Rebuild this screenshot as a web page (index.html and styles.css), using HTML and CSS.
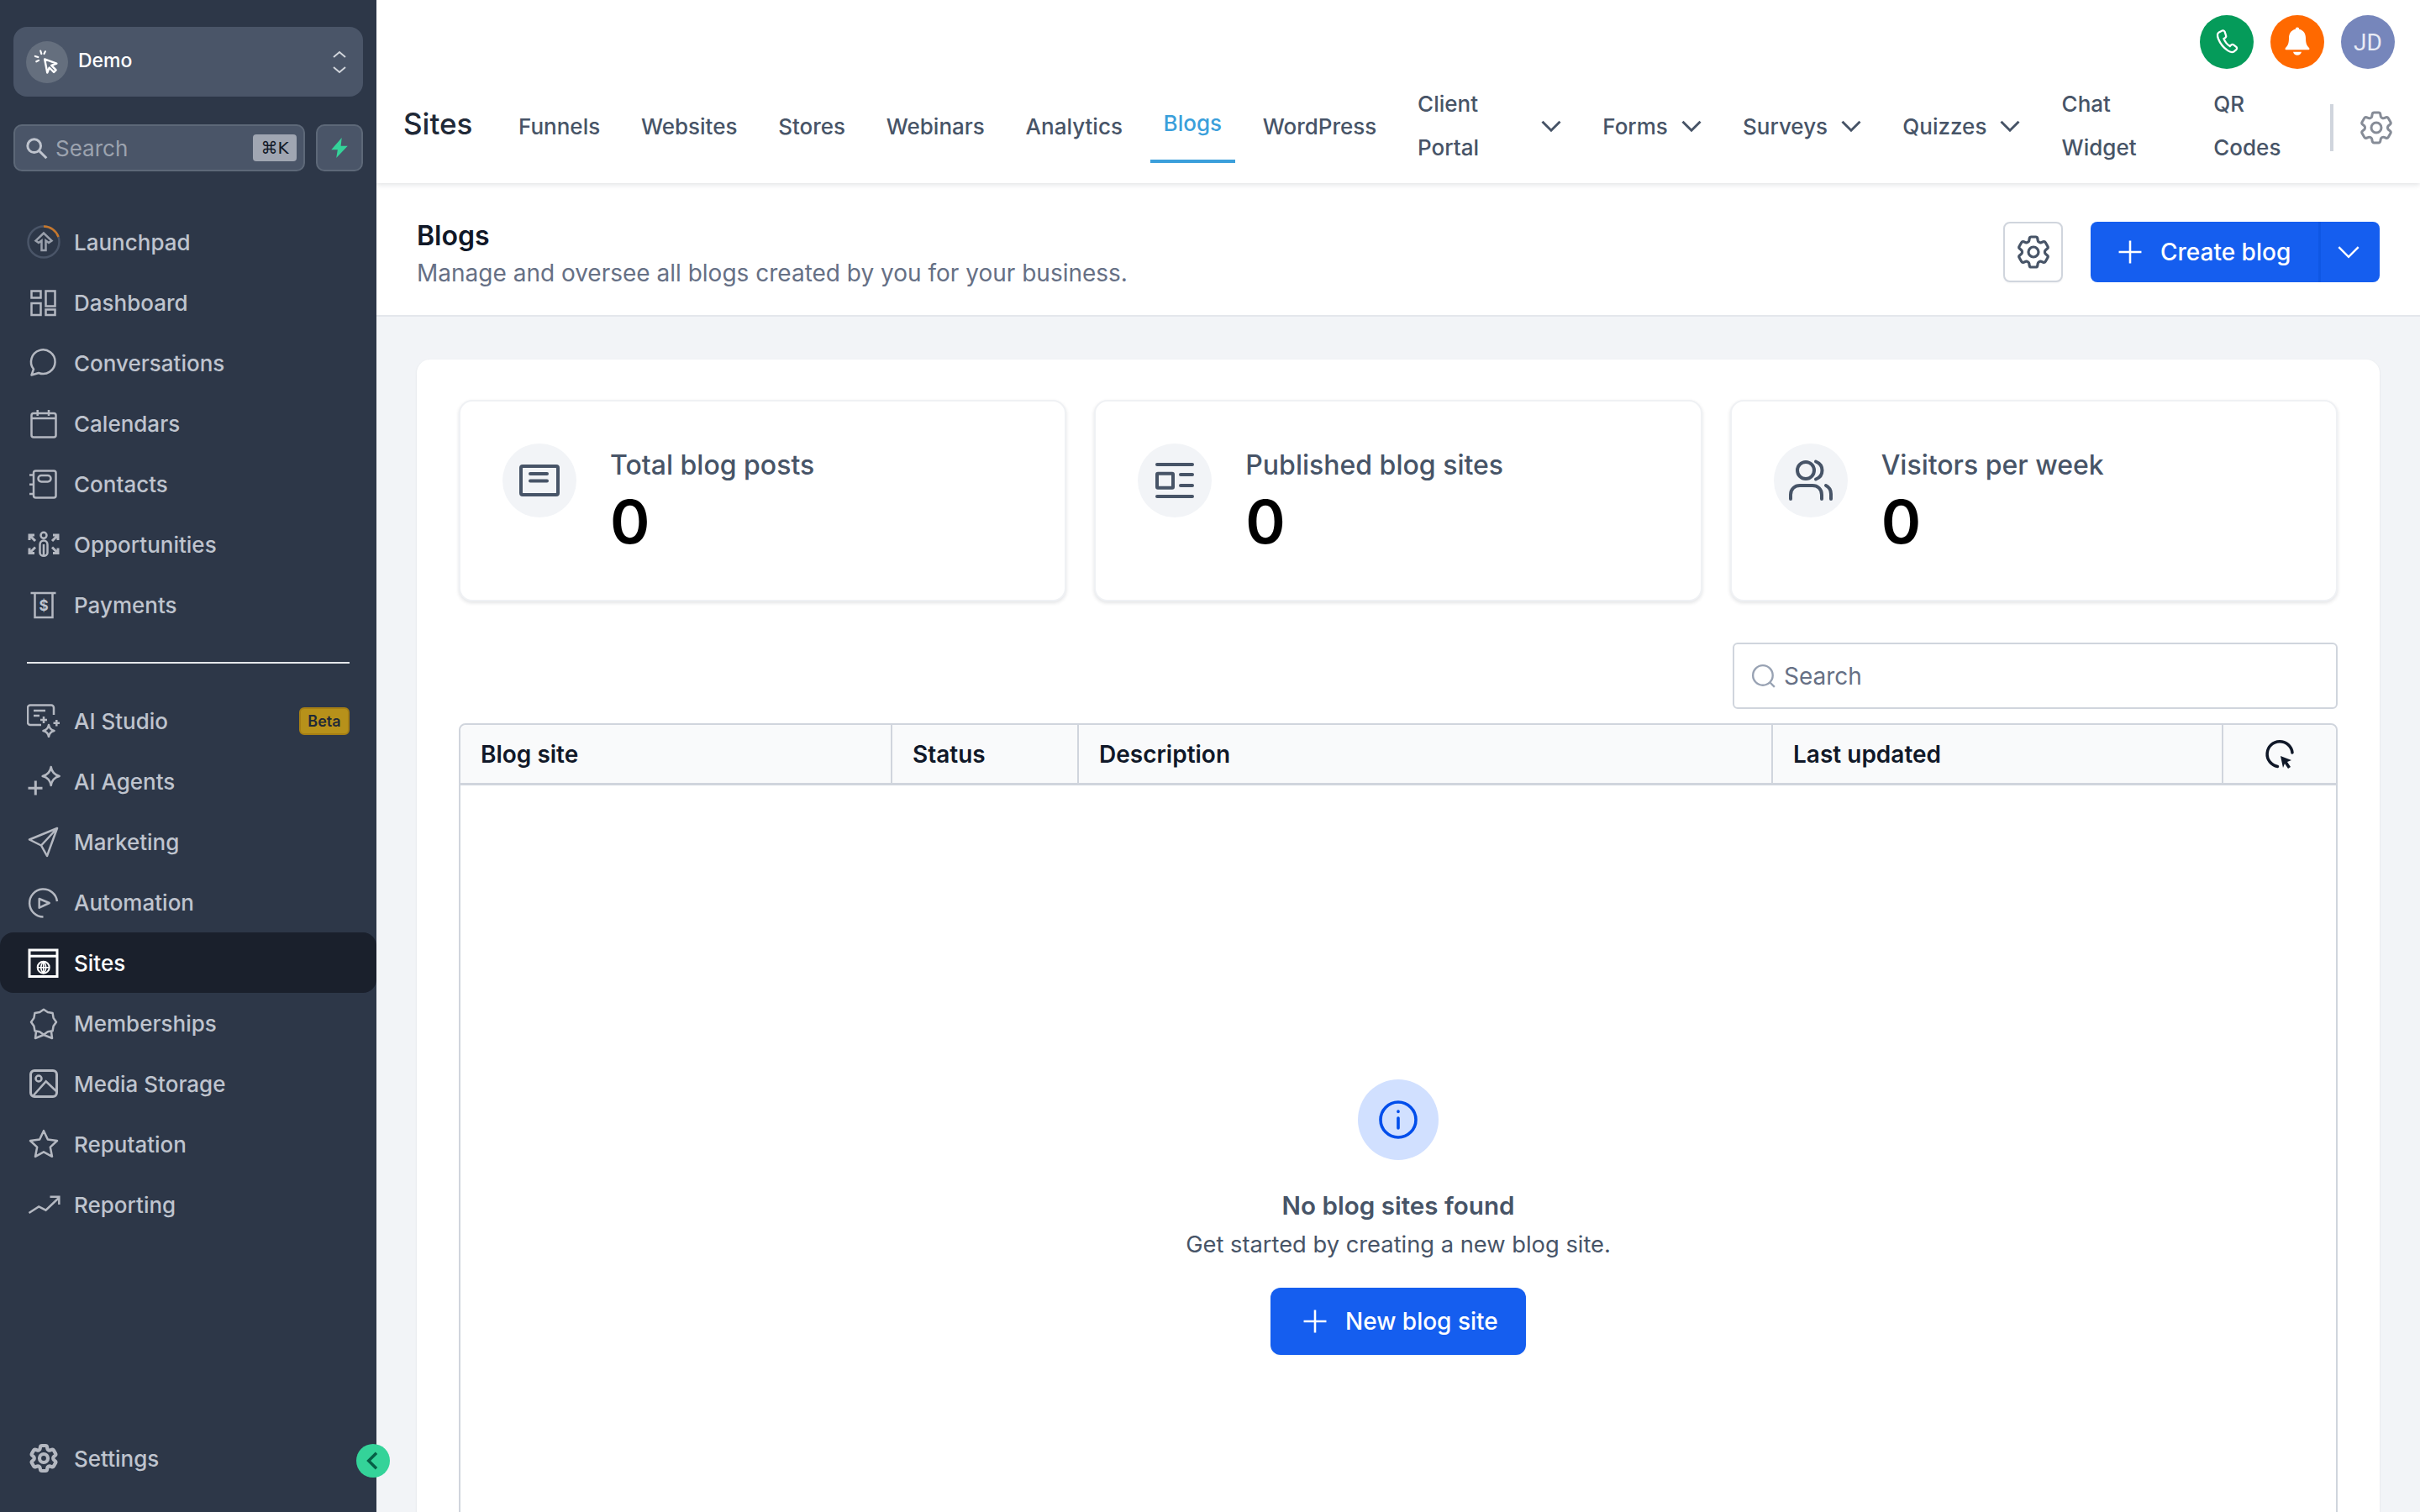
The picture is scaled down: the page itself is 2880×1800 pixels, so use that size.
FILE: index.html
```html
<!DOCTYPE html>
<html lang="en">
<head>
    <meta charset="UTF-8">
    <meta name="viewport" content="width=device-width, initial-scale=1.0">
    <title>Blogs</title>
    <link rel="stylesheet" href="styles.css">
</head>
<body>
    <svg class="sprites" width="0" height="0">
        <symbol id="gear" viewBox="0 0 24 24">
            <path d="M9.594 3.94c.09-.542.56-.94 1.11-.94h2.593c.55 0 1.02.398 1.11.94l.213 1.281c.063.374.313.686.645.87.074.04.147.083.22.127.325.196.72.257 1.075.124l1.217-.456a1.125 1.125 0 0 1 1.37.49l1.296 2.247a1.125 1.125 0 0 1-.26 1.431l-1.003.827c-.293.241-.438.613-.43.992a7.723 7.723 0 0 1 0 .255c-.008.378.137.75.43.991l1.004.827c.424.35.534.955.26 1.43l-1.298 2.247a1.125 1.125 0 0 1-1.369.491l-1.217-.456c-.355-.133-.75-.072-1.076.124a6.47 6.47 0 0 1-.22.128c-.331.183-.581.495-.644.869l-.213 1.281c-.09.543-.56.94-1.11.94h-2.594c-.55 0-1.019-.398-1.11-.94l-.213-1.281c-.062-.374-.312-.686-.644-.87a6.52 6.52 0 0 1-.22-.127c-.325-.196-.72-.257-1.076-.124l-1.217.456a1.125 1.125 0 0 1-1.369-.49l-1.297-2.247a1.125 1.125 0 0 1 .26-1.431l1.004-.827c.292-.24.437-.613.43-.991a6.932 6.932 0 0 1 0-.255c.007-.38-.138-.751-.43-.992l-1.004-.827a1.125 1.125 0 0 1-.26-1.43l1.297-2.247a1.125 1.125 0 0 1 1.37-.491l1.216.456c.356.133.751.072 1.076-.124.072-.044.146-.086.22-.128.332-.183.582-.495.644-.869l.214-1.28Z"/>
            <circle cx="12" cy="12" r="3"/>
        </symbol>
        <symbol id="chev" viewBox="0 0 24 24"><path d="M5 8.500l7 7 7-7"/></symbol>
        <symbol id="plus" viewBox="0 0 24 24"><path d="M12 2.500v19M2.500 12h19"/></symbol>
    </svg>

    <div class="app">
        <aside class="sidebar">
            <div class="workspace">
                <span class="workspace-logo">
                    <svg viewBox="0 0 24 24" class="ico-sm"><path d="M10 9.500l10 3.600-4.300 1.700 3.800 3.800-1.800 1.800-3.800-3.800-1.700 4.300z" fill="none" stroke="#fff" stroke-width="1.700" stroke-linejoin="round"/><path d="M6.500 2.500l.8 2.500M2 7l2.500.8M10.500 3l-1 2M3 11.500l2-1" fill="none" stroke="#fff" stroke-width="1.500" stroke-linecap="round"/></svg>
                </span>
                <span class="workspace-name">Demo</span>
                <svg class="workspace-arrows" viewBox="0 0 16 28"><path d="M1 8l7-6 7 6M1 20l7 6 7-6"/></svg>
            </div>

            <div class="search-row">
                <div class="side-search">
                    <svg viewBox="0 0 24 24" class="side-search-ico"><circle cx="9.500" cy="9.500" r="7"/><path d="M15 15l7.500 7.500"/></svg>
                    <span class="side-search-text">Search</span>
                    <kbd class="kbd">⌘K</kbd>
                </div>
                <button class="bolt-btn">
                    <svg viewBox="0 0 24 24"><path d="M14.500 1L3 14h7l-1.500 9L21 10h-7.500z" fill="#34d399"/></svg>
                </button>
            </div>

            <nav class="side-group">
                <a class="side-item">
                    <svg class="side-ico" viewBox="0 0 40 40"><circle cx="20" cy="20" r="18.500" stroke="#4a5568"/><path d="M20 1.500a18.500 18.500 0 0 1 17.500 12.500" stroke="#c6772c"/><path d="M20 9.500l-9.500 9 3.500 2.500 3.500-2.500V30h5V18.500l3.500 2.500 3.500-2.500z" stroke="#9aa0ac"/></svg>
                    <span>Launchpad</span>
                </a>
                <a class="side-item">
                    <svg class="side-ico" viewBox="0 0 40 40"><rect x="5.500" y="6.500" width="11" height="8"/><rect x="22.500" y="6.500" width="11" height="18"/><rect x="5.500" y="21" width="11" height="14"/><rect x="22.500" y="28.500" width="11" height="6.500"/></svg>
                    <span>Dashboard</span>
                </a>
                <a class="side-item">
                    <svg class="side-ico" viewBox="0 0 40 40"><path d="M5.500 34.500L8 27.500A14.300 14.300 0 1 1 14 32z" stroke-linejoin="round"/></svg>
                    <span>Conversations</span>
                </a>
                <a class="side-item">
                    <svg class="side-ico" viewBox="0 0 40 40"><rect x="5.500" y="8" width="29" height="28.500" rx="2.500"/><path d="M5.500 14h29M12.700 4v7M26 4v7"/></svg>
                    <span>Calendars</span>
                </a>
                <a class="side-item">
                    <svg class="side-ico" viewBox="0 0 40 40"><rect x="8" y="4.500" width="26.500" height="32" rx="2.500"/><rect x="13.500" y="10" width="15" height="7.500" rx="3.700"/><path d="M3 9.500h6M3 20.700h6M3 32h6"/></svg>
                    <span>Contacts</span>
                </a>
                <a class="side-item">
                    <svg class="side-ico" viewBox="0 0 40 40"><circle cx="20" cy="9.300" r="3.500"/><path d="M15.500 20.500c0-3 2-5 4.500-5s4.500 2 4.500 5v9.500c0 5-9 5-9 0zM20 20v13"/><path d="M3 15V9h6M3 9l7 7M37 15V9h-6M37 9l-7 7M3 24.500v6h6M3 30.500l7-7M37 24.500v6h-6M37 30.500l-7-7" stroke-width="3"/></svg>
                    <span>Opportunities</span>
                </a>
                <a class="side-item">
                    <svg class="side-ico" viewBox="0 0 40 40"><path d="M4.500 6h30M9.500 6v29h21V6"/><text x="20" y="27" class="dollar">$</text></svg>
                    <span>Payments</span>
                </a>
            </nav>

            <div class="side-divider"></div>

            <nav class="side-group">
                <a class="side-item">
                    <svg class="side-ico" viewBox="0 0 40 40"><path d="M17 25H4a3 3 0 0 1-3-3V4.500a3 3 0 0 1 3-3h25a3 3 0 0 1 3 3V13"/><path d="M8 8h14M8 14h7M20 15v8M16 19h8M35.300 19v7.500M31.500 22.700h7.500"/><path d="M26 25c.7 4 2.500 6 6.500 7-4 1-5.800 3-6.500 7-.7-4-2.500-6-6.500-7 4-1 5.800-3 6.500-7z" stroke-linejoin="round"/></svg>
                    <span>AI Studio</span>
                    <span class="beta">Beta</span>
                </a>
                <a class="side-item">
                    <svg class="side-ico" viewBox="0 0 40 40"><path d="M28.700 3c1 6 3.800 9.500 10 11-6.200 1.500-9 5-10 11-1-6-3.800-9.500-10-11 6.200-1.500 9-5 10-11z" stroke-linejoin="round"/><path d="M10.300 19.500v17M1.500 28.300h17" stroke-width="3"/></svg>
                    <span>AI Agents</span>
                </a>
                <a class="side-item">
                    <svg class="side-ico" viewBox="0 0 40 40"><path d="M36 4L3 17.500l14 7 7 12.500zM17 24.500L36 4" stroke-linejoin="round"/></svg>
                    <span>Marketing</span>
                </a>
                <a class="side-item">
                    <svg class="side-ico" viewBox="0 0 40 40"><path d="M36 19A16.500 16.500 0 1 0 19.500 37.500"/><path d="M14.700 16v10.700L26.700 21z" stroke-linejoin="round"/></svg>
                    <span>Automation</span>
                </a>
                <a class="side-item side-item--active">
                    <svg class="side-ico" viewBox="0 0 40 40"><rect x="3" y="5" width="33" height="31.500" stroke-width="3"/><path d="M3 12.300h33" stroke-width="3"/><circle cx="19.700" cy="25.700" r="7" stroke-width="2"/><path d="M12.700 25.700h14M19.700 18.700v14M19.700 18.700c-4 4-4 10 0 14M19.700 18.700c4 4 4 10 0 14" stroke-width="1.500"/></svg>
                    <span>Sites</span>
                </a>
                <a class="side-item">
                    <svg class="side-ico" viewBox="0 0 40 40"><path d="M20 3.700L24.800 7.100 30.600 8.100 31.600 13.900 35 18.700 31.600 23.500 30.600 29.300 24.800 30.300 20 33.700 15.200 30.300 9.400 29.300 8.400 23.500 5 18.700 8.400 13.900 9.400 8.100 15.200 7.100z" stroke-linejoin="round"/><path d="M11 30l-1 8 10-4 10 4-1-8" stroke-linejoin="round"/></svg>
                    <span>Memberships</span>
                </a>
                <a class="side-item">
                    <svg class="side-ico" viewBox="0 0 40 40"><rect x="4.500" y="4.500" width="31" height="31" rx="4.500" stroke-width="3"/><circle cx="14" cy="14" r="3.500"/><path d="M7 35l15.700-17.700L36 30"/></svg>
                    <span>Media Storage</span>
                </a>
                <a class="side-item">
                    <svg class="side-ico" viewBox="0 0 24 24"><path d="M12 2.500l2.900 6.200 6.700.9-4.900 4.600 1.300 6.700-6-3.300-6 3.300 1.300-6.700L2.400 9.600l6.700-.9z" stroke-linejoin="round"/></svg>
                    <span>Reputation</span>
                </a>
                <a class="side-item">
                    <svg class="side-ico" viewBox="0 0 24 24"><path d="M1.500 18l7-4.500 5 2.500 9-8.500M16.500 6.500h6.500V12"/></svg>
                    <span>Reporting</span>
                </a>
            </nav>

            <a class="side-item side-item--bottom">
                <svg class="side-ico"><use href="#gear"/></svg>
                <span>Settings</span>
            </a>

            <button class="collapse-btn">
                <svg viewBox="0 0 24 24"><path d="M15 5l-7 7 7 7"/></svg>
            </button>
        </aside>

        <div class="content">
            <header class="topbar">
                <div class="topbar-actions">
                    <span class="round-btn round-btn--call">
                        <svg viewBox="0 0 24 24"><path d="M8.200 2.500L5.500 3.800C3.800 4.800 4 7 5 9.500c1.500 3.700 4.300 7.200 7.800 9.700 2 1.400 4 1.700 5.500.7l1.700-1.500c.7-.7.700-1.700 0-2.300l-2.200-1.700c-.7-.5-1.500-.4-2.100.1l-1 1c-2.200-1.300-4.200-3.700-5.200-6.200l1.200-.8c.7-.5.900-1.300.6-2L10.300 3.300c-.4-.8-1.300-1.200-2.100-.8z"/></svg>
                    </span>
                    <span class="round-btn round-btn--bell">
                        <svg viewBox="0 0 24 24"><path d="M12 1.500c-.8 0-1.300.5-1.300 1.300C7.500 3.500 6 6 6 9.200c0 3.800-.7 5.400-2.500 7.100-.4.500-.2 1.200.5 1.200h16c.7 0 .9-.7.5-1.200C18.700 14.600 18 13 18 9.200c0-3.200-1.500-5.700-4.700-6.400 0-.8-.5-1.300-1.300-1.300zM9 19h6c-.4 1.500-1.500 2.400-3 2.400S9.400 20.500 9 19z"/></svg>
                    </span>
                    <span class="round-btn round-btn--user">JD</span>
                </div>
                <div class="topnav">
                    <h1 class="topnav-title">Sites</h1>
                    <nav class="topnav-items">
                        <a class="tab">Funnels</a>
                        <a class="tab">Websites</a>
                        <a class="tab">Stores</a>
                        <a class="tab">Webinars</a>
                        <a class="tab">Analytics</a>
                        <a class="tab tab--active">Blogs</a>
                        <a class="tab">WordPress</a>
                        <a class="tab tab--client"><span class="tab-wrap">Client Portal</span><svg class="tab-chev"><use href="#chev"/></svg></a>
                        <a class="tab">Forms<svg class="tab-chev"><use href="#chev"/></svg></a>
                        <a class="tab">Surveys<svg class="tab-chev"><use href="#chev"/></svg></a>
                        <a class="tab">Quizzes<svg class="tab-chev"><use href="#chev"/></svg></a>
                        <a class="tab tab--chat"><span class="tab-wrap">Chat Widget</span></a>
                        <a class="tab tab--qr"><span class="tab-wrap">QR Codes</span></a>
                    </nav>
                    <span class="topnav-sep"></span>
                    <svg class="topnav-gear"><use href="#gear"/></svg>
                </div>
            </header>

            <section class="page-head">
                <div class="page-head-text">
                    <h2>Blogs</h2>
                    <p>Manage and oversee all blogs created by you for your business.</p>
                </div>
                <button class="gear-btn"><svg><use href="#gear"/></svg></button>
                <div class="split-btn">
                    <span class="split-main"><svg class="plus-ico"><use href="#plus"/></svg>Create blog</span>
                    <span class="split-arrow"><svg><use href="#chev"/></svg></span>
                </div>
            </section>

            <main class="main">
                <div class="panel">
                    <div class="stats">
                        <div class="stat">
                            <span class="stat-ico">
                                <svg viewBox="0 0 50 50"><rect x="3" y="8" width="44" height="34" rx="2"/><path d="M14 17h20M14 25.500h20" stroke-linecap="round"/></svg>
                            </span>
                            <div class="stat-text">
                                <div class="stat-label">Total blog posts</div>
                                <div class="stat-value">0</div>
                            </div>
                        </div>
                        <div class="stat">
                            <span class="stat-ico">
                                <svg viewBox="0 0 50 50"><path d="M4 6h42M4 44h42M32 18h14M32 31h14" stroke-linecap="round"/><rect x="4" y="16.700" width="19" height="17" rx="1"/></svg>
                            </span>
                            <div class="stat-text">
                                <div class="stat-label">Published blog sites</div>
                                <div class="stat-value">0</div>
                            </div>
                        </div>
                        <div class="stat">
                            <span class="stat-ico">
                                <svg viewBox="0 0 54 54"><circle cx="21" cy="15" r="10"/><path d="M3 49v-5c0-7 5-11 11-11h15c6 0 11 4 11 11v5M33 4.500c5 2 7.500 6 7.500 10.500s-2.500 8.500-7.500 10.500M45 33c4 2 6 6 6 10v6" stroke-linecap="round"/></svg>
                            </span>
                            <div class="stat-text">
                                <div class="stat-label">Visitors per week</div>
                                <div class="stat-value">0</div>
                            </div>
                        </div>
                    </div>

                    <div class="toolbar">
                        <div class="table-search">
                            <svg viewBox="0 0 28 28"><circle cx="13" cy="13" r="11"/><path d="M21 21l5 5"/></svg>
                            <span>Search</span>
                        </div>
                    </div>

                    <div class="table">
                        <div class="table-head">
                            <div class="th">Blog site</div>
                            <div class="th">Status</div>
                            <div class="th">Description</div>
                            <div class="th">Last updated</div>
                            <div class="th th--refresh">
                                <svg viewBox="0 0 36 36"><path d="M33 16A15 15 0 1 0 15.500 32.500" fill="none" stroke="#101828" stroke-width="3.500" stroke-linecap="round"/><path d="M19 20l13 5-5 2 4 6-3 2-4-6-2 5z" fill="#101828"/></svg>
                            </div>
                        </div>
                        <div class="table-body">
                            <span class="empty-ico">
                                <svg viewBox="0 0 24 24"><circle cx="12" cy="12" r="10.500"/><path d="M12 11v6M12 7v.2"/></svg>
                            </span>
                            <h3>No blog sites found</h3>
                            <p>Get started by creating a new blog site.</p>
                            <button class="new-btn"><svg class="plus-ico"><use href="#plus"/></svg>New blog site</button>
                        </div>
                    </div>
                </div>
            </main>
        </div>
    </div>
</body>
</html>
```

FILE: styles.css
```css
* {
    box-sizing: border-box;
}
html, body {
    margin: 0;
    height: 100%;
    overflow: hidden;
}
body {
    font-family: Inter, "Noto Sans", sans-serif;
    font-size: 28px;
    color: #101828;
    background: #f2f4f7;
}
button {
    font-family: inherit;
    cursor: pointer;
}
h1, h2, h3, p {
    margin: 0;
}
.sprites {
    display: block;
    height: 0;
}
.app {
    display: flex;
    height: 100vh;
}

/* sidebar */
.sidebar {
    position: relative;
    flex: 0 0 448px;
    display: flex;
    flex-direction: column;
    padding: 32px 0 28px;
    background: #2d3748;
    z-index: 2;
}
.workspace {
    display: flex;
    align-items: center;
    height: 83px;
    margin: 0 16px;
    padding: 0 20px 0 15px;
    background: #4a5568;
    border-radius: 16px;
}
.workspace-logo {
    display: flex;
    align-items: center;
    justify-content: center;
    width: 50px;
    height: 50px;
    border-radius: 50%;
    background: #656f7e;
}
.ico-sm {
    width: 34px;
    height: 34px;
}
.workspace-name {
    margin-left: 12px;
    flex: 1;
    color: #fff;
    font-size: 23px;
    font-weight: 500;
    margin-bottom: 4px;
}
.workspace-arrows {
    width: 16px;
    height: 28px;
    fill: none;
    stroke: #d1d5db;
    stroke-width: 2;
}
.search-row {
    display: flex;
    gap: 13px;
    margin: 33px 16px 0;
}
.side-search {
    flex: 1;
    display: flex;
    align-items: center;
    height: 56px;
    padding: 0 8px 0 12px;
    background: #4a5568;
    border: 2px solid #5d6878;
    border-radius: 10px;
}
.side-search-ico {
    width: 27px;
    height: 27px;
    fill: none;
    stroke: #bfc4ce;
    stroke-width: 2.6;
}
.side-search-text {
    flex: 1;
    margin-left: 9px;
    color: #9ca3af;
    font-size: 26px;
}
.kbd {
    display: flex;
    align-items: center;
    justify-content: center;
    width: 52px;
    height: 32px;
    border-radius: 4px;
    background: #a0a6b2;
    color: #111827;
    font-family: "DejaVu Sans", sans-serif;
    font-size: 20px;
}
.bolt-btn {
    display: flex;
    align-items: center;
    justify-content: center;
    width: 56px;
    height: 56px;
    padding: 0;
    background: #4a5568;
    border: 2px solid #5d6878;
    border-radius: 10px;
}
.bolt-btn svg {
    width: 26px;
    height: 26px;
}
.side-group {
    display: flex;
    flex-direction: column;
    margin-top: 48px;
}
.side-divider + .side-group {
    margin-top: 32px;
}
.side-divider {
    height: 2px;
    margin: 32px 32px 0;
    background: #e5e7eb;
}
.side-item {
    display: flex;
    align-items: center;
    gap: 16px;
    height: 72px;
    padding: 0 32px;
    color: #bfc4ce;
    font-size: 26px;
    font-weight: 500;
    border-radius: 16px;
}
.side-item--active {
    background: #1a202c;
    color: #fff;
}
.side-item--bottom {
    margin-top: auto;
}
.side-ico {
    flex: 0 0 40px;
    width: 40px;
    height: 40px;
    fill: none;
    stroke: #b4b8c1;
    stroke-width: 2.5;
}
.side-ico[viewBox="0 0 24 24"] {
    stroke-width: 1.5;
}
.side-item--active .side-ico {
    stroke: #fff;
}
.dollar {
    fill: #bfc4ce;
    stroke: none;
    font-size: 17px;
    font-weight: 700;
    text-anchor: middle;
}
.beta {
    margin-left: auto;
    display: flex;
    align-items: center;
    justify-content: center;
    width: 60px;
    height: 33px;
    background: #b7911a;
    border: 2px solid #a67f14;
    border-radius: 6px;
    color: #1f2937;
    font-size: 18px;
    font-weight: 600;
}
.collapse-btn {
    position: absolute;
    left: 424px;
    bottom: 41px;
    display: flex;
    align-items: center;
    justify-content: center;
    width: 40px;
    height: 40px;
    padding: 0;
    border: none;
    border-radius: 50%;
    background: #34d399;
}
.collapse-btn svg {
    width: 32px;
    height: 32px;
    fill: none;
    stroke: #065f46;
    stroke-width: 2.6;
}

/* top bar */
.content {
    flex: 1;
    display: flex;
    flex-direction: column;
    min-width: 0;
}
.topbar {
    position: relative;
    height: 218px;
    background: #fff;
    box-shadow: 0 2px 6px rgba(16, 24, 40, 0.12);
    z-index: 1;
}
.topbar-actions {
    position: absolute;
    top: 18px;
    right: 30px;
    display: flex;
    gap: 20px;
}
.round-btn {
    display: flex;
    align-items: center;
    justify-content: center;
    width: 64px;
    height: 64px;
    border-radius: 50%;
    color: #fff;
}
.round-btn svg {
    width: 34px;
    height: 34px;
}
.round-btn--call {
    background: #059b5a;
}
.round-btn--call svg {
    fill: none;
    stroke: #fff;
    stroke-width: 1.6;
}
.round-btn--bell {
    background: #ff6900;
}
.round-btn--bell svg {
    fill: #fff;
    width: 40px;
    height: 40px;
}
.round-btn--user {
    background: #7686bb;
    font-family: Roboto, sans-serif;
    font-size: 28px;
    color: #e8ebf5;
}
.topnav {
    display: flex;
    align-items: center;
    height: 218px;
    padding: 82px 0 0 32px;
}
.topnav-title {
    flex: 0 0 121px;
    font-size: 35px;
    font-weight: 500;
    color: #1f2937;
    margin-bottom: 6px;
}
.topnav-items {
    display: flex;
    align-items: center;
    gap: 16.7px;
}
.tab {
    position: relative;
    display: flex;
    align-items: center;
    height: 88px;
    padding: 0 16px;
    color: #475467;
    font-size: 26px;
    font-weight: 500;
    white-space: nowrap;
}
.tab--active {
    color: #3b9fdb;
    padding-bottom: 4px;
    border-bottom: 4px solid #3b9fdb;
}
.tab-wrap {
    white-space: normal;
    line-height: 52px;
}
.tab--client .tab-wrap {
    width: 131px;
}
.tab--chat .tab-wrap {
    width: 132px;
}
.tab--qr .tab-wrap {
    width: 107px;
}
.tab-chev {
    width: 36px;
    height: 36px;
    margin: 0 -5.5px 0 10px;
    fill: none;
    stroke: #475467;
    stroke-width: 2;
}
.topnav-sep {
    width: 4px;
    height: 56px;
    margin: 4px 0 0 16px;
    background: #d0d5dd;
}
.topnav-gear {
    width: 48px;
    height: 48px;
    margin: 4px 0 0 27px;
    fill: none;
    stroke: #868c97;
    stroke-width: 1.5;
}

/* page header */
.page-head {
    display: flex;
    align-items: center;
    gap: 33px;
    height: 159px;
    padding: 6px 48px 0 48px;
    background: #fff;
    border-bottom: 2px solid #e4e7ec;
}
.page-head-text {
    flex: 1;
    padding-top: 6px;
}
.page-head h2 {
    font-size: 32px;
    font-weight: 600;
    line-height: 40px;
}
.page-head p {
    margin-top: 4px;
    color: #667085;
    font-size: 28px;
    line-height: 40px;
}
.gear-btn {
    display: flex;
    align-items: center;
    justify-content: center;
    width: 71px;
    height: 72px;
    padding: 0;
    background: #fff;
    border: 2px solid #d0d5dd;
    border-radius: 8px;
    box-shadow: 0 1px 2px rgba(16, 24, 40, 0.05);
}
.gear-btn svg {
    width: 48px;
    height: 48px;
    fill: none;
    stroke: #475467;
    stroke-width: 1.6;
}
.split-btn {
    display: flex;
    height: 72px;
    background: #155eef;
    border-radius: 8px;
    color: #fff;
    font-weight: 500;
}
.split-main {
    display: flex;
    align-items: center;
    gap: 19px;
    width: 271px;
    padding-left: 30px;
}
.plus-ico {
    width: 34px;
    height: 34px;
    fill: none;
    stroke: #fff;
    stroke-width: 1.8;
}
.split-arrow {
    display: flex;
    align-items: center;
    justify-content: center;
    width: 73px;
    padding-right: 4px;
    border-left: 3px solid #0f57e4;
}
.split-arrow svg {
    width: 40px;
    height: 40px;
    fill: none;
    stroke: #fff;
    stroke-width: 1.5;
}

/* main panel */
.main {
    flex: 1;
    min-height: 0;
    padding: 51px 48px 0;
    overflow: hidden;
}
.panel {
    height: 1400px;
    padding: 48px 50px;
    background: #fff;
    border-radius: 16px;
    box-shadow: 0 1px 3px rgba(16, 24, 40, 0.08);
}
.stats {
    display: grid;
    grid-template-columns: repeat(3, 1fr);
    gap: 33px;
}
.stat {
    display: flex;
    align-items: flex-start;
    gap: 40px;
    height: 240px;
    padding: 50px 50px;
    background: #fff;
    border: 2px solid #eff1f4;
    border-radius: 16px;
    box-shadow: 0 2px 4px rgba(16, 24, 40, 0.12);
}
.stat-ico {
    flex: 0 0 88px;
    display: flex;
    align-items: center;
    justify-content: center;
    width: 88px;
    height: 88px;
    border-radius: 50%;
    background: #f2f4f7;
}
.stat-ico svg {
    width: 50px;
    height: 50px;
    fill: none;
    stroke: #475467;
    stroke-width: 4;
}
.stat:last-child .stat-ico svg {
    width: 54px;
    height: 54px;
}
.stat-text {
    margin-top: 3px;
}
.stat-label {
    color: #475467;
    font-size: 32px;
    font-weight: 500;
    line-height: 46px;
}
.stat-value {
    margin-top: 2px;
    color: #000;
    font-size: 72px;
    font-weight: 600;
    line-height: 84px;
}
.toolbar {
    display: flex;
    justify-content: flex-end;
    margin-top: 49px;
}
.table-search {
    display: flex;
    align-items: center;
    gap: 9px;
    width: 720px;
    height: 79px;
    padding: 0 20px;
    border: 2px solid #d0d5dd;
    border-radius: 6px;
    color: #667085;
}
.table-search svg {
    width: 30px;
    height: 30px;
    fill: none;
    stroke: #98a2b3;
    stroke-width: 2.2;
}
.table {
    margin-top: 17px;
    height: 1100px;
    border: 2px solid #d0d5dd;
    border-radius: 8px 8px 0 0;
}
.table-head {
    display: grid;
    grid-template-columns: 514px 222px 826px 536px 1fr;
    height: 72px;
    background: #f9fafb;
    border-bottom: 3px solid #d0d5dd;
    border-radius: 8px 8px 0 0;
}
.th {
    display: flex;
    align-items: center;
    padding-left: 24px;
    border-right: 2px solid #d0d5dd;
    font-weight: 600;
}
.th--refresh {
    justify-content: center;
    padding: 0;
    border-right: none;
}
.th--refresh svg {
    width: 36px;
    height: 36px;
}
.table-body {
    display: flex;
    flex-direction: column;
    align-items: center;
    padding-top: 350px;
}
.empty-ico {
    display: flex;
    align-items: center;
    justify-content: center;
    width: 96px;
    height: 96px;
    border-radius: 50%;
    background: #d1e0ff;
}
.empty-ico svg {
    width: 48px;
    height: 48px;
    fill: none;
    stroke: #004eeb;
    stroke-width: 1.8;
    stroke-linecap: round;
}
.table-body h3 {
    margin-top: 34px;
    color: #475467;
    font-size: 29.6px;
    font-weight: 600;
    line-height: 40px;
}
.table-body p {
    margin-top: 7px;
    color: #475467;
    font-size: 27.3px;
    line-height: 40px;
}
.new-btn {
    display: flex;
    align-items: center;
    gap: 19px;
    width: 304px;
    height: 80px;
    margin-top: 31px;
    padding: 0 0 0 36px;
    border: none;
    border-radius: 12px;
    background: #155eef;
    color: #fff;
    font-size: 28px;
    font-weight: 500;
    box-shadow: 0 1px 2px rgba(16, 24, 40, 0.05);
}
```
